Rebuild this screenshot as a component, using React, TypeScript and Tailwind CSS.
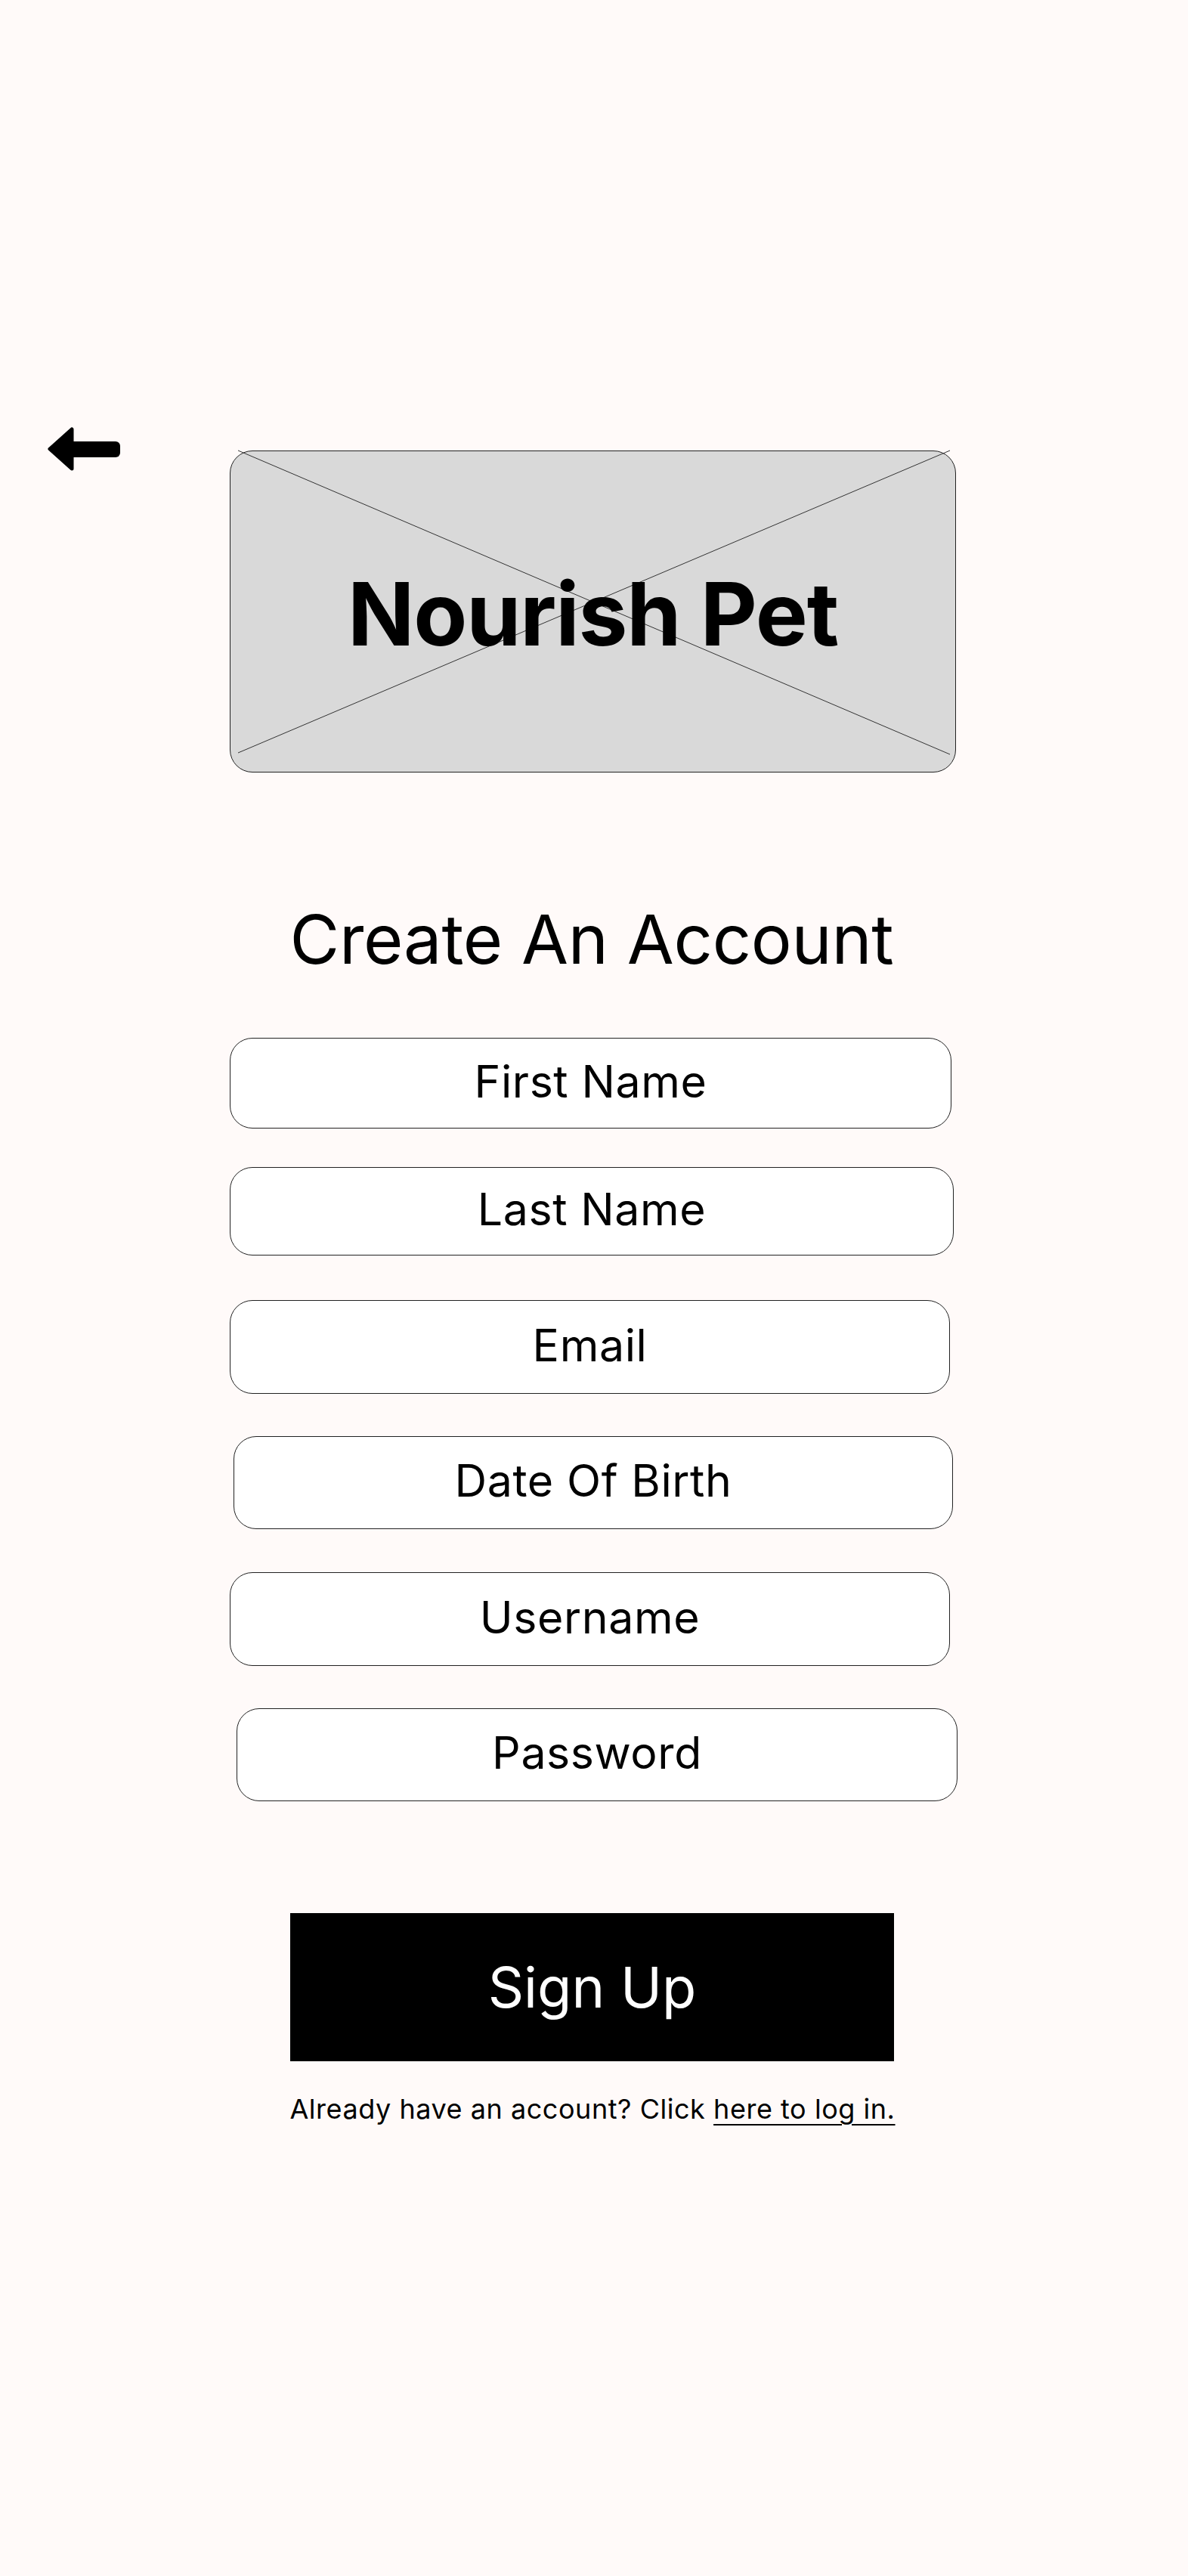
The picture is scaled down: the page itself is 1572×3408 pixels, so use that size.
import { useState } from 'react';

const fields = [
  { label: 'First Name', cls: 'mt-[85px] ml-[304px] w-[955px] h-[120px]' },
  { label: 'Last Name', cls: 'mt-[51px] ml-[304px] w-[958px] h-[117px]' },
  { label: 'Email', cls: 'mt-[59px] ml-[304px] w-[953px] h-[124px]' },
  { label: 'Date Of Birth', cls: 'mt-[56px] ml-[309px] w-[952px] h-[123px]' },
  { label: 'Username', cls: 'mt-[57px] ml-[304px] w-[953px] h-[124px]' },
  { label: 'Password', cls: 'mt-[56px] ml-[313px] w-[954px] h-[123px]' },
];

function BackArrow() {
  return (
    <svg viewBox="0 0 96 58" className="w-[96px] h-[58px]">
      <path d="M3 29 L32 3 L32 55 Z" fill="black" stroke="black" strokeWidth="5" strokeLinejoin="round" />
      <rect x="28" y="19" width="68" height="21" rx="6" fill="black" />
    </svg>
  );
}

export default function App() {
  const [values, setValues] = useState<Record<string, string>>({});

  return (
    <div className="min-h-[3408px] w-full bg-[#fffaf9] font-['Inter',sans-serif] text-black">
      <div className="pt-[565px] flex items-start">
        <button className="ml-[63px] w-[96px] h-[58px]" aria-label="Back">
          <BackArrow />
        </button>
        <div className="relative ml-[145px] mt-[31px] w-[961px] h-[426px] rounded-[30px] border border-[#222] bg-[#d9d9d9] flex items-center justify-center">
          <svg className="absolute inset-0 overflow-visible" width="961" height="426">
            <line x1="10" y1="-1" x2="952" y2="401" stroke="#333" strokeWidth="1" />
            <line x1="952" y1="-1" x2="10" y2="399" stroke="#333" strokeWidth="1" />
          </svg>
          <h1 className="relative mt-[6px] text-[116px] leading-none font-bold tracking-[-0.01em]">Nourish Pet</h1>
        </div>
      </div>

      <h2 className="mt-[176px] ml-[283px] w-[1000px] text-center text-[90px] leading-none font-normal whitespace-nowrap tracking-[-0.003em]">
        Create An Account
      </h2>

      {fields.map((f) => (
        <div
          key={f.label}
          className={`${f.cls} rounded-[30px] border border-[#222] bg-white flex items-center justify-center pb-[6px]`}
        >
          <input
            placeholder={f.label}
            value={values[f.label] || ''}
            onChange={(e) => setValues({ ...values, [f.label]: e.target.value })}
            className="w-full bg-transparent text-center text-[59px] leading-none outline-none placeholder:text-black tracking-[0.01em]"
          />
        </div>
      ))}

      <button className="mt-[148px] ml-[384px] w-[799px] h-[196px] bg-black text-white text-[74px] leading-none flex items-center justify-center">
        Sign Up
      </button>

      <p className="mt-[45px] ml-[383px] w-[802px] text-center text-[36px] leading-none whitespace-nowrap tracking-[0.015em]">
        Already have an account? Click{' '}
        <a href="#" className="underline decoration-[2px] underline-offset-[7px]">here to log in.</a>
      </p>
    </div>
  );
}
